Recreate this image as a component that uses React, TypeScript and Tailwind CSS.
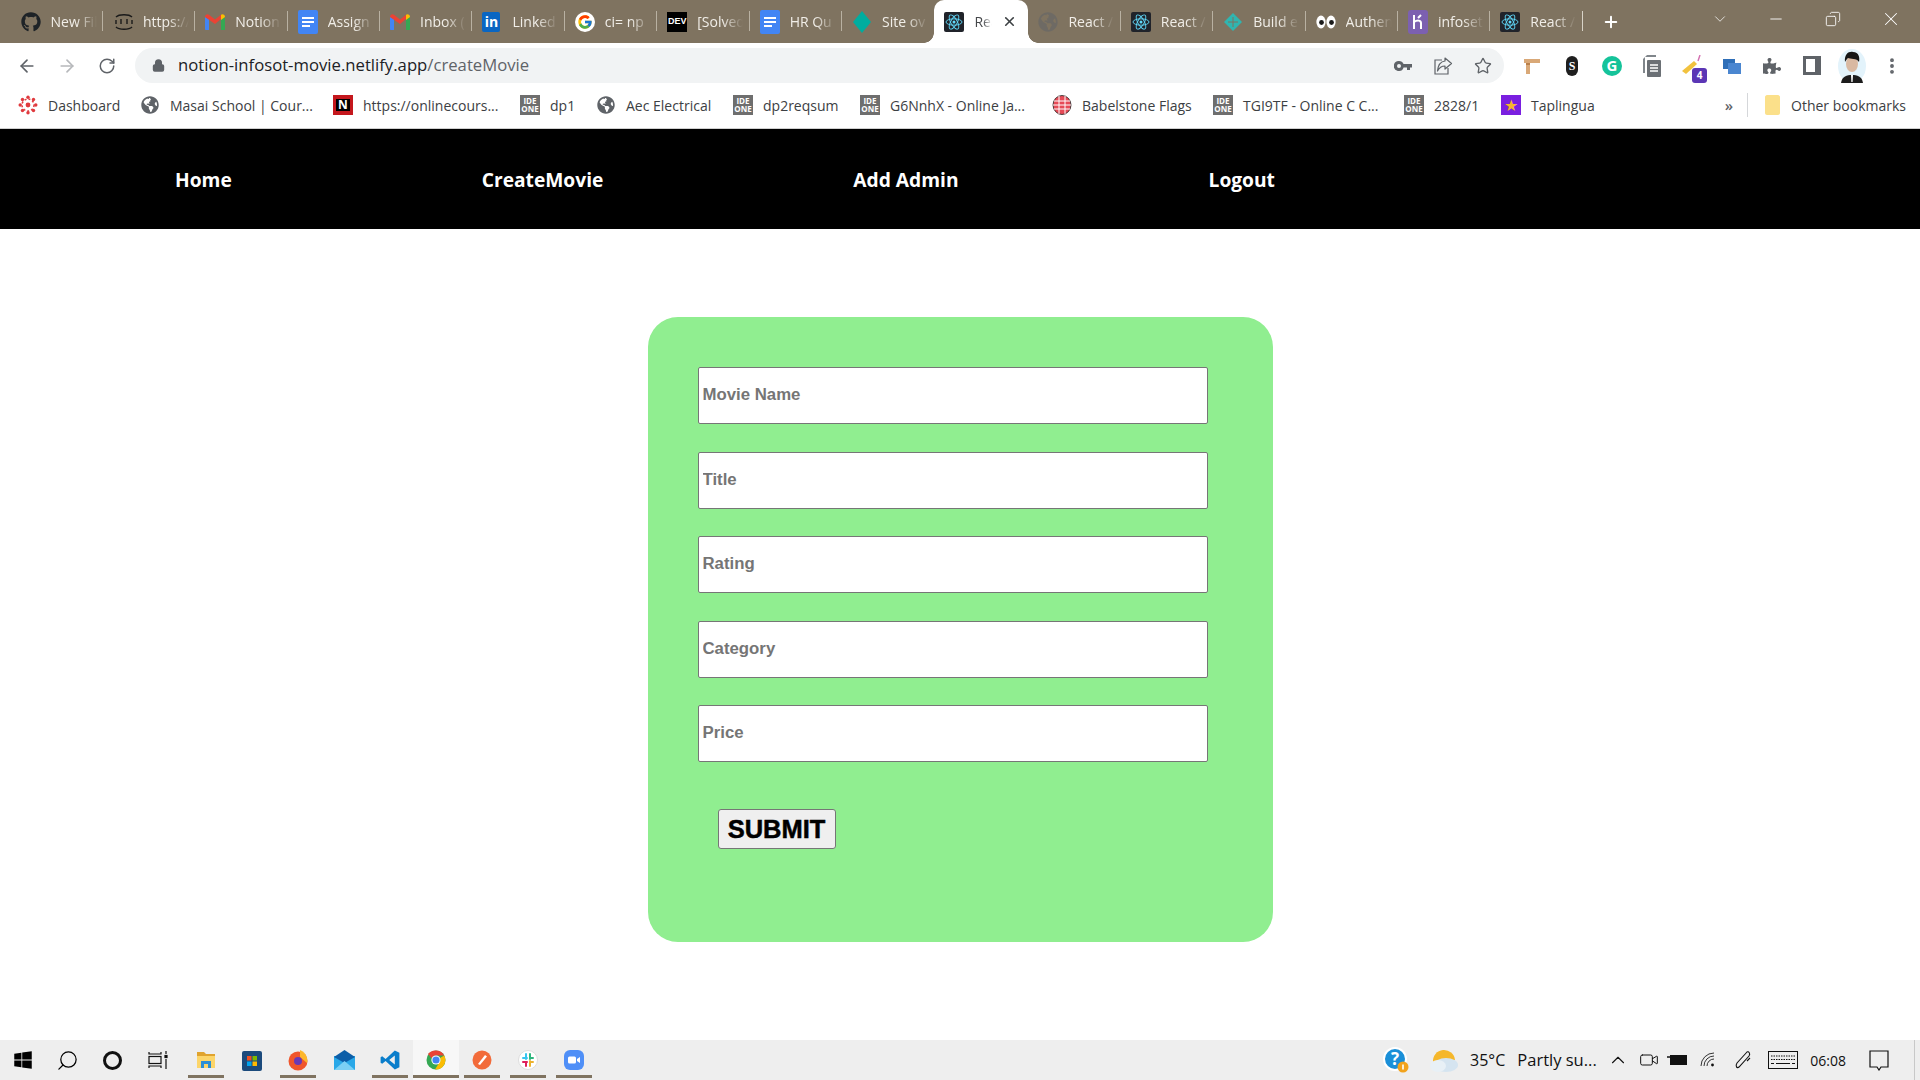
import {
  ArrowLeft,
  ArrowRight,
  ChevronDown,
  ChevronUp,
  Copy,
  Lock,
  Minus,
  MoreVertical,
  Plus,
  RotateCw,
  Search,
  Star,
  Video,
  X,
} from "lucide-react";
import { FaGithub, FaGlobeAmericas, FaPuzzlePiece, FaWindows } from "react-icons/fa";
import { FcGoogle } from "react-icons/fc";

const UI_FONT = "font-['Open_Sans','Noto_Sans',sans-serif]";

function ReactIcon({ size = 20 }: { size?: number }) {
  return (
    <svg width={size} height={size} viewBox="0 0 20 20" aria-hidden>
      <rect width="20" height="20" rx="2" fill="#20232a" />
      <g fill="none" stroke="#61dafb" strokeWidth="0.9">
        <ellipse cx="10" cy="10" rx="8" ry="3.2" />
        <ellipse cx="10" cy="10" rx="8" ry="3.2" transform="rotate(60 10 10)" />
        <ellipse cx="10" cy="10" rx="8" ry="3.2" transform="rotate(120 10 10)" />
      </g>
      <circle cx="10" cy="10" r="1.5" fill="#61dafb" />
    </svg>
  );
}

function GmailIcon() {
  return (
    <svg width="20" height="18" viewBox="0 0 20 18" aria-hidden>
      <path d="M0 4 L4 6 V17 H1 C.4 17 0 16.6 0 16 Z" fill="#4285f4" />
      <path d="M20 4 L16 6 V17 H19 C19.6 17 20 16.6 20 16 Z" fill="#34a853" />
      <path d="M0 4 C0 1.5 2.5 .5 4 1.8 L10 6.5 L16 1.8 L16 6 L10 11 L0 4 Z" fill="#ea4335" />
      <path d="M16 1.8 C17.5 .5 20 1.5 20 4 L16 7 Z" fill="#fbbc04" />
    </svg>
  );
}

function DocsIcon() {
  return (
    <svg width="20" height="24" viewBox="0 0 20 24" aria-hidden>
      <rect width="20" height="24" rx="2" fill="#4285f4" />
      <rect x="4" y="7" width="12" height="2" fill="#fff" />
      <rect x="4" y="11" width="12" height="2" fill="#fff" />
      <rect x="4" y="15" width="8" height="2" fill="#fff" />
    </svg>
  );
}

function IdeOne() {
  return (
    <span className="flex h-5 w-5 shrink-0 flex-col items-center justify-center bg-[#6e6e6e] text-[8px] leading-[8px] font-bold text-white">
      <span>IDE</span>
      <span>ONE</span>
    </span>
  );
}

function CanvasIcon() {
  return (
    <svg width="20" height="20" viewBox="0 0 20 20" aria-hidden>
      <g fill="#e03a3e">
        <circle cx="10" cy="10" r="2.4" />
        <circle cx="10" cy="2.2" r="1.7" />
        <circle cx="10" cy="17.8" r="1.7" />
        <circle cx="2.2" cy="10" r="1.7" />
        <circle cx="17.8" cy="10" r="1.7" />
        <circle cx="4.5" cy="4.5" r="1.7" />
        <circle cx="15.5" cy="4.5" r="1.7" />
        <circle cx="4.5" cy="15.5" r="1.7" />
        <circle cx="15.5" cy="15.5" r="1.7" />
      </g>
      <circle cx="10" cy="10" r="6" fill="none" stroke="#e03a3e" strokeWidth="1.5" strokeDasharray="2 2" />
    </svg>
  );
}

function Tab({
  label,
  icon,
  last,
  noSep,
  dim,
}: {
  label: string;
  icon: React.ReactNode;
  last?: boolean;
  noSep?: boolean;
  dim?: boolean;
}) {
  return (
    <div className="relative flex h-[43px] w-[92.4px] shrink-0 items-center pl-[10px]">
      <span className={`flex h-5 w-6 shrink-0 items-center justify-start ${dim ? "opacity-50" : ""}`}>{icon}</span>
      <span className="ml-[6px] w-[46px] overflow-hidden text-[14px] whitespace-nowrap text-[#f1eee8] [mask-image:linear-gradient(to_right,black_55%,transparent)]">
        {label}
      </span>
      {!noSep && <span className={`absolute right-0 top-[11px] h-[20px] w-px ${last ? "bg-[#d8d3c8]" : "bg-[#b9b1a2]"}`} />}
    </div>
  );
}

function ActiveTab() {
  return (
    <div className="relative flex h-[43px] w-[94px] shrink-0 items-center rounded-t-[10px] bg-white pl-[10px]">
      <span className="absolute -left-[10px] bottom-0 h-[10px] w-[10px] bg-[radial-gradient(circle_at_0_0,transparent_9.5px,white_10px)]" />
      <span className="absolute -right-[10px] bottom-0 h-[10px] w-[10px] bg-[radial-gradient(circle_at_100%_0,transparent_9.5px,white_10px)]" />
      <ReactIcon />
      <span className="ml-[10px] w-[18px] overflow-hidden text-[14px] text-[#45474a] [mask-image:linear-gradient(to_right,black_50%,transparent)]">
        React
      </span>
      <X size={15} strokeWidth={2.6} className="ml-[10px] text-[#3c4043]" />
    </div>
  );
}

function TabStrip() {
  return (
    <div className="flex h-[43px] items-center bg-[#7f7360]">
      <div className="flex pl-[10.5px]">
        <Tab label="New File" icon={<FaGithub size={20} color="#1e2327" />} />
        <Tab
          label="https://"
          icon={
            <svg width="22" height="20" viewBox="0 0 22 20" fill="none" stroke="#1a1a1a" strokeWidth="1.4" aria-hidden>
              <path d="M3 5 C6 2 16 2 19 5 M3 15 C6 18 16 18 19 15 M3 8 V12 M19 8 V12" />
              <path d="M8 7 V12 M14 7 V12" />
            </svg>
          }
        />
        <Tab label="Notion" icon={<GmailIcon />} />
        <Tab label="Assign" icon={<DocsIcon />} />
        <Tab label="Inbox (" icon={<GmailIcon />} />
        <Tab
          label="Linked"
          icon={
            <span className="flex h-5 w-[18px] items-center justify-center rounded-[2px] bg-[#0a66c2] text-[14px] leading-none font-bold text-white">
              in
            </span>
          }
        />
        <Tab
          label="ci= np"
          icon={
            <span className="flex h-5 w-5 items-center justify-center rounded-full bg-white">
              <FcGoogle size={16} />
            </span>
          }
        />
        <Tab
          label="[Solved"
          icon={
            <span className="flex h-5 w-5 items-center justify-center bg-black font-['Liberation_Sans',sans-serif] text-[9px] font-bold text-white">
              DEV
            </span>
          }
        />
        <Tab label="HR Qu" icon={<DocsIcon />} />
        <Tab
          label="Site ov"
          noSep
          icon={
            <svg width="20" height="24" viewBox="0 0 20 24" aria-hidden>
              <path d="M10 1 L19 12 L10 23 L1 12 Z" fill="#00ad9f" />
            </svg>
          }
        />
        <ActiveTab />
        <Tab label="React /" dim icon={<FaGlobeAmericas size={20} color="#5f6368" />} />
        <Tab label="React /" icon={<ReactIcon />} />
        <Tab
          label="Build e"
          icon={
            <svg width="20" height="20" viewBox="0 0 20 20" aria-hidden>
              <path d="M10 1 L19 10 L10 19 L1 10 Z" fill="#2fb5b0" />
              <path d="M5 10 H15 M10 5 V15" stroke="#7f7360" strokeWidth="1" />
            </svg>
          }
        />
        <Tab
          label="Authen"
          icon={
            <svg width="20" height="20" viewBox="0 0 20 20" aria-hidden>
              <ellipse cx="5" cy="10" rx="4.6" ry="6.5" fill="#fff" />
              <ellipse cx="15" cy="10" rx="4.6" ry="6.5" fill="#fff" />
              <circle cx="5.5" cy="10.5" r="2.4" fill="#1a1a1a" />
              <circle cx="15.5" cy="10.5" r="2.4" fill="#1a1a1a" />
            </svg>
          }
        />
        <Tab
          label="infoset"
          icon={
            <svg width="20" height="24" viewBox="0 0 20 24" aria-hidden>
              <rect width="20" height="24" rx="3" fill="#7c60b0" />
              <path d="M6 5 V19 M6 12 C9 10 13 10 13 13 V19 M13 5 L10 8" stroke="#fff" strokeWidth="2" fill="none" />
            </svg>
          }
        />
        <Tab label="React /" last icon={<ReactIcon />} />
      </div>
      <Plus size={18} strokeWidth={2.6} className="ml-[19px] text-white" />
      <div className="ml-auto flex h-[38px] items-center self-start text-white">
        <ChevronDown size={18} strokeWidth={1} className="mr-[38px]" />
        <Minus size={18} strokeWidth={1.2} className="mr-[40px]" />
        <Copy size={16} strokeWidth={1.3} className="mr-[39px] -scale-x-100" />
        <X size={22} strokeWidth={1.1} className="mr-[18px]" />
      </div>
    </div>
  );
}

function ToolButton({ children }: { children: React.ReactNode }) {
  return <span className="flex w-10 shrink-0 items-center justify-center">{children}</span>;
}

function Toolbar() {
  return (
    <div className="flex h-[43px] items-center bg-white pt-[2px] text-[#5f6368]">
      <div className="flex w-[135px] shrink-0 pl-[7px]">
        <ToolButton>
          <ArrowLeft size={20} strokeWidth={2} />
        </ToolButton>
        <ToolButton>
          <ArrowRight size={20} strokeWidth={2} className="text-[#b6b8bb]" />
        </ToolButton>
        <ToolButton>
          <RotateCw size={18} strokeWidth={2} />
        </ToolButton>
      </div>
      <div className="flex h-[35px] w-[1369px] shrink-0 items-center rounded-full bg-[#f1f3f4] pl-[17px]">
        <Lock size={13} strokeWidth={3} className="fill-[#5f6368]" />
        <span className="ml-[13px] text-[16.7px] leading-none text-[#202124]">
          notion-infosot-movie.netlify.app<span className="text-[#5f6368]">/createMovie</span>
        </span>
        <div className="ml-auto flex pr-[1px]">
          <ToolButton>
            <svg width="18" height="12" viewBox="0 0 18 12" aria-hidden>
              <path
                fillRule="evenodd"
                d="M5 1 A5 5 0 0 1 9.6 4 H18 V7.5 H16 V10 H13 V7.5 H9.6 A5 5 0 1 1 5 1 Z M5 4 A2 2 0 1 0 5 8 A2 2 0 1 0 5 4 Z"
                fill="#5f6368"
              />
            </svg>
          </ToolButton>
          <ToolButton>
            <svg width="20" height="20" viewBox="0 0 20 20" fill="none" stroke="#5f6368" strokeWidth="1.2" aria-hidden>
              <path d="M9 4 H2 V18 H15 V12" />
              <path d="M12 2 L18.5 7.5 L12 13 V10 C8 10 6 12 4.5 15 C5 10 7.5 5.5 12 5 Z" strokeLinejoin="round" />
            </svg>
          </ToolButton>
          <ToolButton>
            <Star size={18} strokeWidth={1.8} />
          </ToolButton>
        </div>
      </div>
      <div className="ml-[8px] flex">
        <ToolButton>
          <svg width="18" height="18" viewBox="0 0 18 18" aria-hidden>
            <path d="M1 2 H17 V6 H7 V17 H3 V6 H1 Z" fill="#d9a877" />
            <path d="M3 6 H7 V8 H3 Z" fill="#b97f4a" />
          </svg>
        </ToolButton>
        <ToolButton>
          <span className="flex h-[20px] w-[12px] items-center justify-center rounded-[6px] bg-[#1f1f1f] font-['Liberation_Serif',serif] text-[12px] font-bold text-white">
            S
          </span>
        </ToolButton>
        <ToolButton>
          <span className="flex h-5 w-5 items-center justify-center rounded-full bg-[#15c39a] text-[15px] leading-none font-bold text-white">
            G
          </span>
        </ToolButton>
        <ToolButton>
          <svg width="20" height="24" viewBox="0 0 20 24" aria-hidden>
            <path d="M5 1 H14 V3 H3 V19 H1 V5 Z" fill="#80868b" />
            <rect x="5" y="6" width="14" height="17" rx="1" fill="#6b7075" />
            <path d="M8 11 H16 M8 14 H16 M8 17 H16" stroke="#fff" strokeWidth="1.3" />
          </svg>
        </ToolButton>
        <ToolButton>
          <span className="relative flex h-6 w-6 items-center justify-center">
            <svg width="22" height="22" viewBox="0 0 22 22" aria-hidden>
              <path d="M1 16 L13 6 L16 9 L5 19 Z" fill="#f2c23e" />
              <path d="M17 6 L19 0" stroke="#d36fb0" strokeWidth="1.4" />
            </svg>
            <span className="absolute -bottom-[5px] -right-[3px] flex h-[15px] w-[15px] items-center justify-center rounded-[3px] bg-[#5b36b5] text-[10px] leading-none font-bold text-white">
              4
            </span>
          </span>
        </ToolButton>
        <ToolButton>
          <svg width="20" height="20" viewBox="0 0 20 20" aria-hidden>
            <rect x="1" y="3" width="12" height="10" fill="#2f6fb8" />
            <rect x="6" y="7" width="13" height="11" fill="#4a86d0" />
          </svg>
        </ToolButton>
        <ToolButton>
          <FaPuzzlePiece size={18} color="#5f6368" />
        </ToolButton>
        <ToolButton>
          <span className="h-[19px] w-[18px] border-[3px] border-r-[6px] border-[#5f6368] bg-white" />
        </ToolButton>
        <ToolButton>
          <svg width="28" height="34" viewBox="0 0 28 34" aria-hidden>
            <ellipse cx="14" cy="17" rx="14" ry="17" fill="#e3f3fb" />
            <path d="M3 34 C4 27 9 26 14 26 C19 26 24 27 25 34 Z" fill="#1c1c1c" />
            <ellipse cx="14" cy="15" rx="6" ry="8" fill="#d9b9a2" />
            <path d="M7 13 C6 5 11 2 15 3 C21 3 22 9 21 13 C19 9 12 10 10 9 C9 10 8 11 7 13 Z" fill="#161616" />
            <path d="M13 26 L15 26 L14.6 33 H13.4 Z" fill="#fff" />
          </svg>
        </ToolButton>
        <ToolButton>
          <MoreVertical size={20} strokeWidth={2.6} />
        </ToolButton>
      </div>
    </div>
  );
}

function Bookmark({ icon, label, width }: { icon: React.ReactNode; label: string; width: number }) {
  return (
    <div className="flex shrink-0 items-center" style={{ width }}>
      <span className="flex w-5 shrink-0 items-center justify-center">{icon}</span>
      <span className="ml-[10px] text-[14px] whitespace-nowrap text-[#3c4043]">{label}</span>
    </div>
  );
}

function BookmarksBar() {
  const globe = <FaGlobeAmericas size={18} color="#5f6368" />;
  return (
    <div className="flex h-[43px] items-center border-b border-[#d0d0d0] bg-white pb-[4px] pl-[18px]">
      <Bookmark icon={<CanvasIcon />} label="Dashboard" width={122} />
      <Bookmark icon={globe} label="Masai School | Cour..." width={193} />
      <Bookmark
        icon={
          <span className="flex h-5 w-5 items-center justify-center bg-[#c4171d] text-[12px] leading-none font-bold text-white">
            <span className="bg-black px-[2px]">N</span>
          </span>
        }
        label="https://onlinecours..."
        width={187}
      />
      <Bookmark icon={<IdeOne />} label="dp1" width={76} />
      <Bookmark icon={globe} label="Aec Electrical" width={137} />
      <Bookmark icon={<IdeOne />} label="dp2reqsum" width={127} />
      <Bookmark icon={<IdeOne />} label="G6NnhX - Online Ja..." width={192} />
      <Bookmark
        icon={
          <svg width="20" height="20" viewBox="0 0 20 20" aria-hidden>
            <ellipse cx="10" cy="10" rx="9" ry="9.5" fill="#e64b57" stroke="#222" strokeWidth="0.8" />
            <path d="M2 6 H18 M1 10 H19 M2 14 H18 M7 1 V19 M13 1 V19" stroke="#fff" strokeWidth="1" />
          </svg>
        }
        label="Babelstone Flags"
        width={161}
      />
      <Bookmark icon={<IdeOne />} label="TGI9TF - Online C C..." width={191} />
      <Bookmark icon={<IdeOne />} label="2828/1" width={97} />
      <Bookmark
        icon={
          <span className="flex h-5 w-5 items-center justify-center bg-[#7a1fe0] text-[16px] leading-none text-[#f7b52c]">★</span>
        }
        label="Taplingua"
        width={80}
      />
      <div className="ml-auto flex items-center pr-[14px]">
        <span className="mr-[14px] text-[15px] leading-none font-semibold text-[#5f6368]">»</span>
        <span className="mr-[16px] h-[24px] w-px bg-[#d5d7da]" />
        <svg width="16" height="20" viewBox="0 0 16 20" aria-hidden>
          <path d="M1 2 C1 1 2 0 3 0 H14 C15 0 16 1 16 2 V18 C16 19 15 20 14 20 H3 C2 20 1 19 1 18 Z" fill="#fbe08a" />
        </svg>
        <span className="ml-[11px] text-[14px] whitespace-nowrap text-[#3c4043]">Other bookmarks</span>
      </div>
    </div>
  );
}

function SiteNav() {
  return (
    <nav className="flex h-[100px] items-center gap-[250px] bg-black pl-[175px] pt-[3px]">
      {["Home", "CreateMovie", "Add Admin", "Logout"].map((link) => (
        <a key={link} className="text-[19.2px] font-bold text-white">
          {link}
        </a>
      ))}
    </nav>
  );
}

function CreateMovieForm() {
  return (
    <form className="mx-auto mt-[88px] flex h-[625px] w-[625px] flex-col rounded-[30px] bg-[#90ee90] pl-[50px] pt-[50px] font-['Liberation_Sans',sans-serif]">
      <div className="flex flex-col gap-[27.5px]">
        {["Movie Name", "Title", "Rating", "Category", "Price"].map((name) => (
          <input
            key={name}
            placeholder={name}
            className="h-[57px] w-[510px] rounded-[2px] border border-[#767676] bg-white px-[4px] pb-[1px] text-[16.8px] font-bold placeholder:text-[#757575]"
          />
        ))}
      </div>
      <button
        type="button"
        className="mt-[47px] ml-[20px] h-[40px] w-[118px] rounded-[3px] border border-[#767676] bg-[#efefef] pt-[1px] text-[25.5px] leading-none font-bold text-black [-webkit-text-stroke:0.5px_black]"
      >
        SUBMIT
      </button>
    </form>
  );
}

function TaskItem({
  children,
  on,
  active,
  narrow,
}: {
  children: React.ReactNode;
  on?: boolean;
  active?: boolean;
  narrow?: boolean;
}) {
  return (
    <div
      className={`relative flex h-10 shrink-0 items-center justify-center ${narrow ? "w-[45px]" : "w-[46px]"} ${
        active ? "bg-[#f7f7f7]" : ""
      }`}
    >
      {children}
      {on && (
        <span className={`absolute bottom-[2px] h-[3px] bg-[#7f7360] ${active ? "inset-x-0" : "inset-x-[5px]"}`} />
      )}
    </div>
  );
}

function Taskbar() {
  return (
    <div className="flex h-10 shrink-0 items-center bg-[#eeeeee] text-black">
      <TaskItem narrow>
        <FaWindows size={20} color="#000" />
      </TaskItem>
      <TaskItem narrow>
        <Search size={23} strokeWidth={1.3} className="-scale-x-100" />
      </TaskItem>
      <TaskItem narrow>
        <span className="h-[19px] w-[19px] rounded-full border-[3px] border-[#111]" />
      </TaskItem>
      <TaskItem narrow>
        <svg width="20" height="20" viewBox="0 0 20 20" fill="none" stroke="#111" strokeWidth="1.2" aria-hidden>
          <path d="M1 2 V4 H13 V2 M1 18 V16 H13 V18" />
          <rect x="1" y="6.5" width="12" height="7" />
          <path d="M18 1 V4 M18 9 V19" />
          <rect x="17" y="5.5" width="2" height="2" fill="#111" />
        </svg>
      </TaskItem>
      <div className="ml-[3px] flex">
        <TaskItem on>
          <svg width="20" height="20" viewBox="0 0 20 20" aria-hidden>
            <path d="M1 2 H8 L10 4 H19 V8 H1 Z" fill="#e0a32e" />
            <rect x="1" y="6" width="18" height="12" fill="#fcd56a" />
            <path d="M5 18 V11 H15 V18 H12 V14 H8 V18 Z" fill="#2b8fd6" />
          </svg>
        </TaskItem>
        <TaskItem>
          <svg width="20" height="22" viewBox="0 0 20 22" aria-hidden>
            <rect y="2" width="20" height="20" rx="2" fill="#1b4a7c" />
            <rect x="5" y="7" width="4.5" height="4.5" fill="#f25022" />
            <rect x="10.5" y="7" width="4.5" height="4.5" fill="#7fba00" />
            <rect x="5" y="12.5" width="4.5" height="4.5" fill="#00a4ef" />
            <rect x="10.5" y="12.5" width="4.5" height="4.5" fill="#ffb900" />
          </svg>
        </TaskItem>
        <TaskItem on>
          <svg width="20" height="22" viewBox="0 0 20 22" aria-hidden>
            <circle cx="10" cy="12" r="9.5" fill="#f0562c" />
            <path d="M12 1 C19 4 20 10 19 14 L12 8 Z" fill="#fdb72c" />
            <circle cx="10" cy="12" r="4" fill="#6a3ab5" />
          </svg>
        </TaskItem>
        <TaskItem>
          <svg width="21" height="20" viewBox="0 0 21 20" aria-hidden>
            <rect y="6" width="21" height="14" fill="#29a8e8" />
            <path d="M0 7 L10.5 0 L21 7 L10.5 13 Z" fill="#0c5ea8" />
            <path d="M0 20 L10.5 11 L21 20 Z" fill="#7bd0f5" />
          </svg>
        </TaskItem>
        <TaskItem on>
          <svg width="20" height="24" viewBox="0 0 100 100" aria-hidden>
            <path d="M74 3 L97 14 V86 L74 97 L28 55 L11 69 L3 64 V36 L11 31 L28 45 Z M74 28 L46 50 L74 72 Z" fill="#0a7ecb" />
          </svg>
        </TaskItem>
        <TaskItem on active>
          <svg width="20" height="20" viewBox="0 0 20 20" aria-hidden>
            <circle cx="10" cy="10" r="9.5" fill="#34a853" />
            <path d="M10 .5 A9.5 9.5 0 0 1 18.2 5.5 H10 A4.5 4.5 0 0 0 5.8 8.6 L2 4 A9.5 9.5 0 0 1 10 .5 Z" fill="#ea4335" />
            <path d="M18.2 5.5 A9.5 9.5 0 0 1 9 19.5 L13 13 A4.5 4.5 0 0 0 14 8 Z" fill="#fbbc04" />
            <circle cx="10" cy="10" r="4.6" fill="#fff" />
            <circle cx="10" cy="10" r="3.6" fill="#4285f4" />
          </svg>
        </TaskItem>
        <TaskItem on>
          <svg width="20" height="20" viewBox="0 0 20 20" aria-hidden>
            <circle cx="10" cy="10" r="9.5" fill="#f26b3a" />
            <path d="M6 14 L13 5 L15 6.5 L8 15 Z" fill="#fff" />
          </svg>
        </TaskItem>
        <TaskItem on>
          <svg width="20" height="20" viewBox="0 0 20 20" aria-hidden>
            <circle cx="10" cy="10" r="9.5" fill="#fff" stroke="#ddd" />
            <path d="M8 4 V9 M5 8 H9" stroke="#36c5f0" strokeWidth="2" strokeLinecap="round" />
            <path d="M12 4 V9 M12 8 H15" stroke="#2eb67d" strokeWidth="2" strokeLinecap="round" />
            <path d="M5 12 H9 M8 12 V16" stroke="#e01e5a" strokeWidth="2" strokeLinecap="round" />
            <path d="M12 11 V16 M12 12 H15" stroke="#ecb22e" strokeWidth="2" strokeLinecap="round" />
          </svg>
        </TaskItem>
        <TaskItem on>
          <svg width="20" height="20" viewBox="0 0 20 20" aria-hidden>
            <rect width="20" height="20" rx="6" fill="#4f8ff7" />
            <rect x="4" y="6.5" width="8" height="7" rx="1.5" fill="#fff" />
            <path d="M13 9 L16 7 V13 L13 11 Z" fill="#fff" />
          </svg>
        </TaskItem>
      </div>

      <div className={`ml-auto flex h-10 items-center text-[#111] ${UI_FONT}`}>
        <svg width="26" height="26" viewBox="0 0 26 26" aria-hidden>
          <circle cx="12" cy="12" r="11" fill="#1a8fd8" stroke="#fff" strokeWidth="2" />
          <text x="12" y="18" textAnchor="middle" fontSize="17" fontWeight="700" fill="#fff">?</text>
          <circle cx="20" cy="20" r="5.5" fill="#f2a31d" />
          <rect x="19.2" y="17.5" width="1.6" height="5" fill="#fff" />
        </svg>
        <svg className="ml-[21px]" width="28" height="25" viewBox="0 0 28 25" aria-hidden>
          <path d="M3 14 A11 11 0 0 1 25 12 Z" fill="#f5b72b" />
          <ellipse cx="16" cy="17" rx="12" ry="7" fill="#d5e4f0" />
          <ellipse cx="8" cy="18" rx="8" ry="6" fill="#e8f0f6" />
        </svg>
        <span className="ml-[12px] text-[16px] whitespace-nowrap">35°C</span>
        <span className="ml-[12px] w-[84px] text-[16.5px] whitespace-nowrap">Partly su...</span>
        <ChevronUp size={22} strokeWidth={1.2} className="ml-[6px]" />
        <Video size={20} strokeWidth={1.2} className="ml-[10px]" />
        <svg className="ml-[8px]" width="20" height="12" viewBox="0 0 20 12" aria-hidden>
          <rect x="3" y="1" width="17" height="10" fill="#111" />
          <path d="M0 3 H3" stroke="#111" strokeWidth="1.5" />
        </svg>
        <svg className="ml-[13px]" width="16" height="16" viewBox="0 0 16 16" fill="none" stroke="#333" strokeWidth="1" aria-hidden>
          <path d="M1 14 A13 13 0 0 1 14 1 M4 14 A10 10 0 0 1 14 4 M7 14 A7 7 0 0 1 14 7" />
          <circle cx="12.5" cy="13" r="1.4" fill="#111" stroke="none" />
        </svg>
        <svg className="ml-[16px]" width="20" height="20" viewBox="0 0 20 20" fill="none" stroke="#111" strokeWidth="1.1" aria-hidden>
          <path d="M15 2 L5 13 C3 16 5 19 7 17 L17 6 C19 3 16 1 15 2 Z M18 8 L15 11" />
        </svg>
        <svg className="ml-[16px]" width="30" height="18" viewBox="0 0 30 18" fill="none" stroke="#111" strokeWidth="1" aria-hidden>
          <rect x=".5" y=".5" width="29" height="17" />
          <path d="M3 5 H27 M3 8.5 H27" strokeDasharray="1.5 1" />
          <path d="M3 12.5 H6 M8 12.5 H22 M24 12.5 H27" />
        </svg>
        <span className="ml-[12px] text-[14px] whitespace-nowrap">06:08</span>
        <svg className="ml-[23px]" width="20" height="21" viewBox="0 0 20 21" fill="none" stroke="#111" strokeWidth="1.2" aria-hidden>
          <path d="M1 1 H19 V17 H12 L10 20 L8 17 H1 Z" />
        </svg>
        <span className="ml-[25px] mr-[5px] h-10 w-px bg-[#c8c8c8]" />
      </div>
    </div>
  );
}

export default function App() {
  return (
    <div className={`flex h-screen w-full flex-col overflow-hidden bg-white ${UI_FONT}`}>
      <TabStrip />
      <Toolbar />
      <BookmarksBar />
      <main className="flex-1">
        <SiteNav />
        <CreateMovieForm />
      </main>
      <Taskbar />
    </div>
  );
}
